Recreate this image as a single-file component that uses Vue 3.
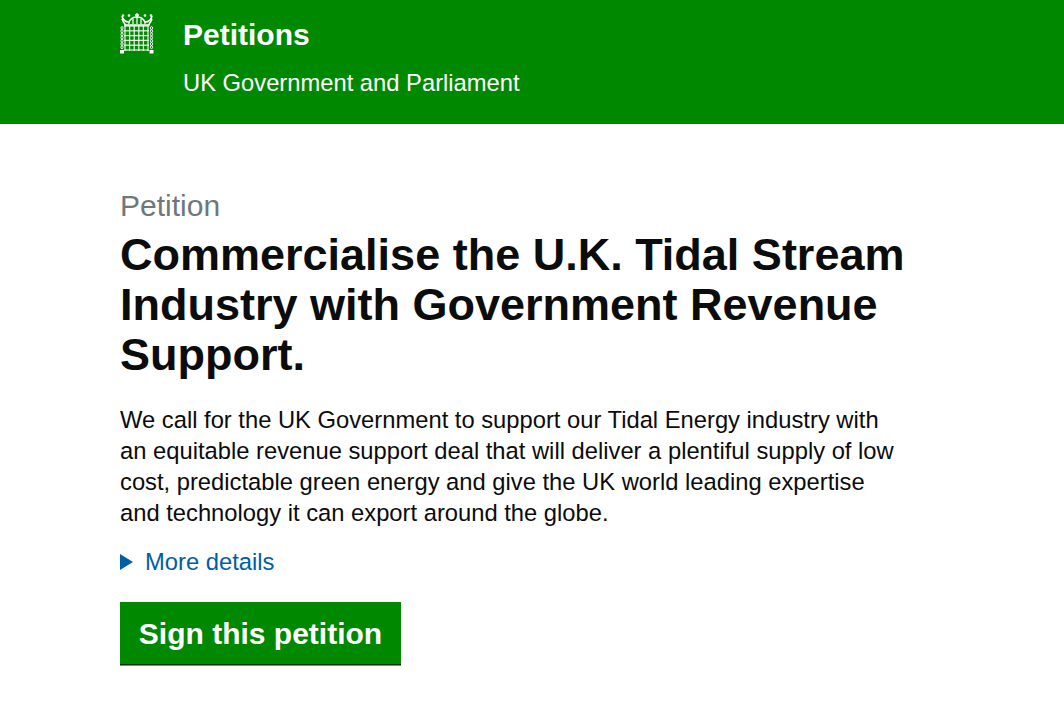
<script setup>
const bars = [5, 9.6, 14.2, 18.8, 23.4, 28]
const rails = [13, 17.8, 22.6, 27.4, 32.2, 37]
const chain = [15, 18.2, 21.4, 24.6, 27.8, 31, 34.2]
const points = [3, 9, 17, 25, 31]
</script>

<template>
  <div class="page">
    <header class="header">
      <div class="brand">
        <svg class="crest" width="34" height="41" viewBox="0 0 34 41" aria-hidden="true">
          <g fill="none" stroke="#fff">
            <path d="M2 3 C3 8 6 9 9 9 C11 5 14 4 17 4 C20 4 23 5 25 9 C28 9 31 8 32 3" stroke-width="1.6" />
            <path d="M2 6 C4 11 5 10 5 12 H29 C29 10 30 11 32 6" stroke-width="1.6" />
            <path d="M9 9 V11 M13 6 V11 M17 4 V11 M21 6 V11 M25 9 V11" stroke-width="1.2" />
            <path d="M17 0 V4 M15 2 H19" stroke-width="1.3" />
            <path v-for="x in bars" :key="'b' + x" :d="`M${x} 13 V38`" stroke-width="1.3" stroke-opacity=".85" />
            <path v-for="y in rails" :key="'h' + y" :d="`M4 ${y} H29`" stroke-width="1.3" stroke-opacity=".85" />
            <ellipse v-for="y in chain" :key="'cl' + y" cx="2" :cy="y" rx="1.1" ry="1.5" stroke-width=".9" />
            <ellipse v-for="y in chain" :key="'cr' + y" cx="31.5" :cy="y" rx="1.1" ry="1.5" stroke-width=".9" />
          </g>
          <g fill="#fff">
            <circle v-for="x in points" :key="x" :cx="x" cy="2.5" r="1.3" />
            <rect x="0" y="37" width="4" height="3.5" />
            <rect x="29.5" y="37" width="4" height="3.5" />
          </g>
        </svg>
        <div class="titles">
          <div class="site-name">Petitions</div>
          <div class="site-sub">UK Government and Parliament</div>
        </div>
      </div>
    </header>
    <main class="main">
      <div class="kicker">Petition</div>
      <h1 class="title">Commercialise the U.K. Tidal Stream Industry with Government Revenue Support.</h1>
      <p class="lead">We call for the UK Government to support our Tidal Energy industry with an equitable revenue support deal that will deliver a plentiful supply of low cost, predictable green energy and give the UK world leading expertise and technology it can export around the globe.</p>
      <div class="details"><span class="arrow"></span><span>More details</span></div>
      <a class="button">Sign this petition</a>
    </main>
  </div>
</template>

<style scoped>
.page {
  width: 1064px;
  height: 708px;
  overflow: hidden;
  background: #fff;
  font-family: "Liberation Sans", Arial, sans-serif;
  color: #0b0c0c;
}
.header {
  height: 124px;
  box-sizing: border-box;
  background: #008800;
  color: #fff;
  padding: 13px 0 0 120px;
}
.brand { display: flex; }
.crest { flex: none; margin-right: 29px; }
.site-name { font-size: 30px; line-height: 44px; font-weight: 700; }
.site-sub { font-size: 23.75px; line-height: 30px; margin-top: 11px; }
.main { padding: 64px 0 0 120px; width: 800px; }
.kicker { font-size: 30px; line-height: 35px; color: #6f777b; }
.title { margin: 7px 0 0; font-size: 45px; line-height: 50px; font-weight: 700; width: 800px; }
.lead { margin: 24px 0 0; font-size: 23.75px; line-height: 31px; width: 790px; }
.details { display: flex; align-items: center; margin-top: 18px; height: 31px; font-size: 23.75px; color: #005ea5; }
.arrow {
  width: 0; height: 0; margin-right: 12px;
  border-left: 13px solid #005ea5;
  border-top: 8px solid transparent;
  border-bottom: 8px solid transparent;
}
.button {
  display: block;
  width: 281px;
  height: 62px;
  box-sizing: border-box;
  margin-top: 25px;
  background: #008800;
  color: #fff;
  font-size: 30px;
  font-weight: 700;
  line-height: 63px;
  text-align: center;
  box-shadow: 0 1px 0 #002f00, 0 2px 0 #6a9a6a;
}
</style>
